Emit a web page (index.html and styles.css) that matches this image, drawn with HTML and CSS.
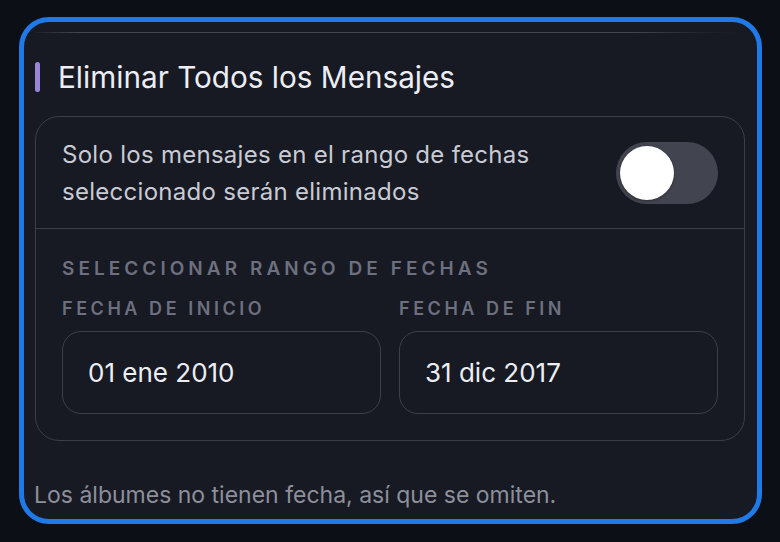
FILE: index.html
```html
<!DOCTYPE html>
<html lang="es">
<head>
<meta charset="utf-8">
<link rel="stylesheet" href="styles.css">
</head>
<body>
<div class="panel">
  <div class="topline"></div>
  <div class="title-row">
    <span class="accent"></span>
    <h2 class="title">Eliminar Todos los Mensajes</h2>
  </div>
  <div class="card">
    <div class="toggle-row">
      <p class="toggle-text">Solo los mensajes en el rango de fechas<br>seleccionado serán eliminados</p>
      <div class="switch"><span class="knob"></span></div>
    </div>
    <div class="range">
      <div class="range-label">SELECCIONAR RANGO DE FECHAS</div>
      <div class="fields">
        <div class="field">
          <div class="field-label">FECHA DE INICIO</div>
          <div class="input">01 ene 2010</div>
        </div>
        <div class="field">
          <div class="field-label">FECHA DE FIN</div>
          <div class="input">31 dic 2017</div>
        </div>
      </div>
    </div>
  </div>
  <p class="note">Los álbumes no tienen fecha, así que se omiten.</p>
</div>
</body>
</html>
```
FILE: styles.css
```css
html, body {
  margin: 0;
  padding: 0;
  background: #0d0f16;
  width: 780px;
  height: 542px;
  overflow: hidden;
  font-family: Inter, "Noto Sans", sans-serif;
}

.panel {
  box-sizing: border-box;
  margin: 17px 0 0 19px;
  width: 743px;
  height: 507px;
  border: 5px solid #1f7ae8;
  border-radius: 30px;
  background: #171923;
  padding: 10px 12px 0 11px;
}

.topline {
  height: 1px;
  margin: 0 5px 0 0;
  background: linear-gradient(90deg, rgba(67,69,79,0.15), #43454f 6%, #43454f 85%, rgba(67,69,79,0.25) 94%, rgba(67,69,79,0));
}

.title-row {
  display: flex;
  align-items: center;
  margin-top: 29px;
  height: 30px;
}

.accent {
  width: 5px;
  height: 30px;
  border-radius: 3px;
  background: #9a86d8;
}

.title {
  margin: 0 0 0 18px;
  font-size: 29.7px;
  font-weight: 400;
  color: #eceef4;
  line-height: 30px;
}

.card {
  margin-top: 24px;
  border: 1px solid #3b3e49;
  border-radius: 24px;
}

.toggle-row {
  display: flex;
  align-items: center;
  justify-content: space-between;
  height: 111px;
  padding: 0 26px;
  border-bottom: 1px solid #3b3e49;
}

.toggle-text {
  margin: 0;
  font-size: 24px;
  letter-spacing: 0.28px;
  line-height: 37px;
  color: #c9cbd4;
}

.switch {
  width: 102px;
  height: 62px;
  border-radius: 31px;
  background: #42444f;
  display: flex;
  align-items: center;
  padding-left: 4px;
  box-sizing: border-box;
  flex-shrink: 0;
}

.knob {
  width: 54px;
  height: 54px;
  border-radius: 50%;
  background: #ffffff;
  box-shadow: 0 1px 3px rgba(0,0,0,0.35);
}

.range {
  padding: 28px 26px 26px 26px;
}

.range-label {
  font-size: 19px;
  font-weight: 600;
  letter-spacing: 4.05px;
  color: #6d707e;
  line-height: 24px;
  white-space: nowrap;
}

.fields {
  display: flex;
  gap: 18px;
  margin-top: 17px;
}

.field {
  flex: 1;
}

.field-label {
  font-size: 18px;
  font-weight: 600;
  letter-spacing: 3.55px;
  color: #6d707e;
  line-height: 22px;
  white-space: nowrap;
}

.input {
  margin-top: 11px;
  box-sizing: border-box;
  height: 83px;
  border: 1px solid #3d404b;
  border-radius: 19px;
  display: flex;
  align-items: center;
  padding-left: 25px;
  font-size: 26px;
  color: #eceef4;
}

.note {
  margin: 41px 0 0 -1px;
  font-size: 23px;
  color: #8d909b;
  line-height: 26px;
}
```
